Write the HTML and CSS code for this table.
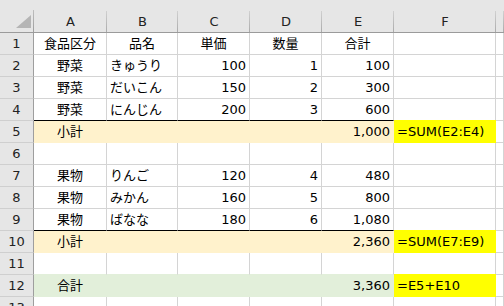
FILE: index.html
```html
<!DOCTYPE html>
<html lang="ja">
<head>
<meta charset="utf-8">
<title>Sheet</title>
<link rel="stylesheet" href="styles.css">
</head>
<body>
<div class="sheet">
  <div class="corner"><span class="tri"></span></div>
  <div class="hd">A</div><div class="hd">B</div><div class="hd">C</div><div class="hd">D</div><div class="hd">E</div><div class="hd">F</div><div class="hd"></div>

  <div class="c rh">1</div>
  <div class="c ctr">食品区分</div><div class="c ctr">品名</div><div class="c ctr">単価</div><div class="c ctr">数量</div><div class="c ctr">合計</div><div class="c"></div><div class="c"></div>

  <div class="c rh">2</div>
  <div class="c ctr">野菜</div><div class="c">きゅうり</div><div class="c num">100</div><div class="c num">1</div><div class="c num">100</div><div class="c"></div><div class="c"></div>

  <div class="c rh">3</div>
  <div class="c ctr">野菜</div><div class="c">だいこん</div><div class="c num">150</div><div class="c num">2</div><div class="c num">300</div><div class="c"></div><div class="c"></div>

  <div class="c rh">4</div>
  <div class="c ctr bl">野菜</div><div class="c bl">にんじん</div><div class="c num bl">200</div><div class="c num bl">3</div><div class="c num bl">600</div><div class="c"></div><div class="c"></div>

  <div class="c rh">5</div>
  <div class="c ctr sub">小計</div><div class="c sub"></div><div class="c sub"></div><div class="c sub"></div><div class="c num sub">1,000</div><div class="c fx">=SUM(E2:E4)</div><div class="c"></div>

  <div class="c rh">6</div>
  <div class="c"></div><div class="c"></div><div class="c"></div><div class="c"></div><div class="c"></div><div class="c"></div><div class="c"></div>

  <div class="c rh">7</div>
  <div class="c ctr">果物</div><div class="c">りんご</div><div class="c num">120</div><div class="c num">4</div><div class="c num">480</div><div class="c"></div><div class="c"></div>

  <div class="c rh">8</div>
  <div class="c ctr">果物</div><div class="c">みかん</div><div class="c num">160</div><div class="c num">5</div><div class="c num">800</div><div class="c"></div><div class="c"></div>

  <div class="c rh">9</div>
  <div class="c ctr bl">果物</div><div class="c bl">ばなな</div><div class="c num bl">180</div><div class="c num bl">6</div><div class="c num bl">1,080</div><div class="c"></div><div class="c"></div>

  <div class="c rh">10</div>
  <div class="c ctr sub">小計</div><div class="c sub"></div><div class="c sub"></div><div class="c sub"></div><div class="c num sub">2,360</div><div class="c fx">=SUM(E7:E9)</div><div class="c"></div>

  <div class="c rh">11</div>
  <div class="c gb"></div><div class="c gb"></div><div class="c gb"></div><div class="c gb"></div><div class="c gb"></div><div class="c"></div><div class="c"></div>

  <div class="c rh">12</div>
  <div class="c ctr tot">合計</div><div class="c tot"></div><div class="c tot"></div><div class="c tot"></div><div class="c num tot">3,360</div><div class="c fx">=E5+E10</div><div class="c"></div>

  <div class="c rh">13</div>
  <div class="c"></div><div class="c"></div><div class="c"></div><div class="c"></div><div class="c"></div><div class="c"></div><div class="c"></div>
</div>
</body>
</html>
```

FILE: styles.css
```css
html, body {
  margin: 0;
  padding: 0;
  background: #ffffff;
  overflow: hidden;
}

.sheet {
  display: grid;
  grid-template-columns: 34px 73px 71px 72px 72px 72px 102px 8px;
  grid-template-rows: 33px;
  grid-auto-rows: 22px;
  font-family: "DejaVu Sans", "Noto Sans CJK JP", sans-serif;
  font-size: 13px;
  color: #000;
}

.corner {
  box-sizing: border-box;
  display: flex;
  justify-content: flex-end;
  align-items: flex-end;
  padding: 0 3px 4px 0;
  background: #e6e6e6 linear-gradient(#bdbdbd, #9e9e9e) right bottom / 1px 22px no-repeat;
  border-bottom: 1px solid #9b9b9b;
}

.tri {
  width: 15px;
  height: 13px;
  background: #b5b5b5;
  clip-path: polygon(100% 0, 100% 100%, 0 100%);
}

.hd {
  box-sizing: border-box;
  padding-top: 11px;
  line-height: 21px;
  text-align: center;
  color: #222;
  background: #e6e6e6 linear-gradient(#d0d0d0, #ababab) right bottom / 1px 21px no-repeat;
  border-bottom: 1px solid #9b9b9b;
}

.c {
  box-sizing: border-box;
  border-right: 1px solid #d4d4d4;
  border-bottom: 1px solid #d4d4d4;
  line-height: 21px;
  padding: 0 3px;
  white-space: nowrap;
}

.rh {
  background: #e6e6e6;
  border-right-color: #9e9e9e;
  border-bottom-color: #cfcfcf;
  text-align: center;
  color: #222;
  padding: 0;
}

.ctr { text-align: center; }
.num { text-align: right; }

.bl { border-bottom-color: #000; }
.gb { border-bottom-color: #e2efda; }

.sub {
  background: #fff2cc;
  border-right-color: #fff2cc;
  border-bottom-color: #fff2cc;
}

.tot {
  background: #e2efda;
  border-right-color: #e2efda;
  border-bottom-color: #e2efda;
}

.fx {
  background: #ffff00;
  border-right-color: #ffff00;
  border-bottom-color: #ffff00;
  box-shadow: 0 -1px 0 #ffff00;
}
```
